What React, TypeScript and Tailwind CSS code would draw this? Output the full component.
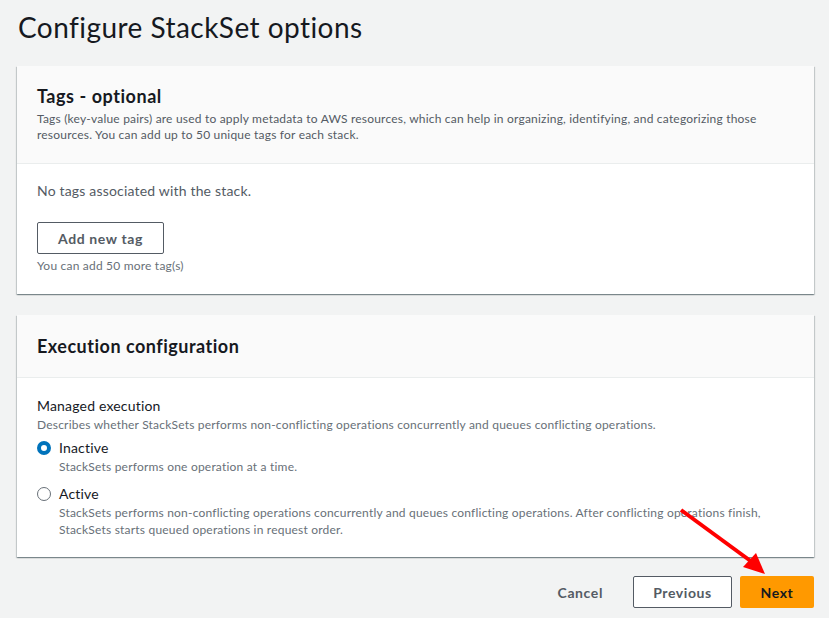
import React from 'react';

const Radio = ({ checked }: { checked: boolean }) =>
  checked ? (
    <span className="mt-[4px] block w-[14px] h-[14px] rounded-full border-[4px] border-[#0073bb] bg-white shrink-0" />
  ) : (
    <span className="mt-[4px] block w-[14px] h-[14px] rounded-full border-[1.5px] border-[#687078] bg-white shrink-0" />
  );

const cardShadow =
  'shadow-[0_1px_1px_0_rgba(0,28,36,0.3),1px_1px_1px_0_rgba(0,28,36,0.15),-1px_1px_1px_0_rgba(0,28,36,0.15)]';

const App = () => {
  return (
    <div className="relative min-h-screen bg-[#f2f3f3] pl-[17px] pr-[15px] font-['Lato',sans-serif] text-[#16191f]">
      <h1 className="pt-[10px] pl-[1px] text-[28px] leading-[34px] font-normal tracking-[0.45px]">
        Configure StackSet options
      </h1>

      <section className={`mt-[22px] bg-white ${cardShadow}`}>
        <div className="bg-[#fafafa] border-b border-[#eaeded] px-[20px] pt-[19px] pb-[20px]">
          <h2 className="text-[18px] leading-[22px] font-bold tracking-[0.55px]">Tags - optional</h2>
          <p className="mt-[4px] text-[12px] leading-[16px] tracking-[0.2px] text-[#545b64]">
            Tags (key-value pairs) are used to apply metadata to AWS resources, which can help in
            organizing, identifying, and categorizing those resources. You can add up to 50 unique
            tags for each stack.
          </p>
        </div>
        <div className="px-[20px] pt-[16px] pb-[20px]">
          <p className="text-[14px] leading-[22px] tracking-[0.18px] text-[#545b64]">
            No tags associated with the stack.
          </p>
          <button className="mt-[20px] h-[32px] w-[127px] rounded-[2px] border border-[#545b64] bg-white text-[14px] font-bold tracking-[0.6px] text-[#545b64]">
            Add new tag
          </button>
          <p className="mt-[4px] text-[12px] leading-[16px] tracking-[0.2px] text-[#687078]">
            You can add 50 more tag(s)
          </p>
        </div>
      </section>

      <section className={`mt-[21px] bg-white ${cardShadow}`}>
        <div className="bg-[#fafafa] border-b border-[#eaeded] px-[20px] pt-[20px] pb-[20px]">
          <h2 className="text-[18px] leading-[22px] font-bold tracking-[0.5px]">Execution configuration</h2>
        </div>
        <div className="px-[20px] pt-[17px] pb-[19px]">
          <p className="text-[14px] leading-[22px] tracking-[0.18px]">Managed execution</p>
          <p className="text-[12px] leading-[16px] tracking-[0.2px] text-[#687078]">
            Describes whether StackSets performs non-conflicting operations concurrently and queues
            conflicting operations.
          </p>
          <div className="mt-[4px] flex gap-[8px]">
            <Radio checked />
            <div>
              <p className="text-[14px] leading-[22px] tracking-[0.18px]">Inactive</p>
              <p className="text-[12px] leading-[16px] tracking-[0.2px] text-[#687078]">
                StackSets performs one operation at a time.
              </p>
            </div>
          </div>
          <div className="mt-[8px] flex gap-[8px]">
            <Radio checked={false} />
            <div>
              <p className="text-[14px] leading-[22px] tracking-[0.18px]">Active</p>
              <p className="-mt-[1px] text-[12px] leading-[17px] tracking-[0.2px] text-[#687078] pr-[20px]">
                StackSets performs non-conflicting operations concurrently and queues conflicting
                operations. After conflicting operations finish, StackSets starts queued operations in
                request order.
              </p>
            </div>
          </div>
        </div>
      </section>

      <div className="mt-[19px] flex items-center justify-end gap-[8px] pb-[9px]">
        <button className="h-[32px] px-[20px] mr-[2px] text-[14px] font-bold tracking-[0.6px] text-[#545b64]">
          Cancel
        </button>
        <button className="h-[32px] w-[99px] rounded-[2px] border border-[#545b64] bg-white text-[14px] font-bold tracking-[0.6px] text-[#545b64]">
          Previous
        </button>
        <button className="h-[32px] w-[74px] rounded-[2px] bg-[#ff9900] text-[14px] font-bold tracking-[0.6px] text-[#16191f]">
          Next
        </button>
      </div>

      <svg className="pointer-events-none absolute left-0 top-0" width="829" height="618">
        <line x1="681" y1="510" x2="752" y2="562" stroke="#f00" strokeWidth="4" />
        <polygon points="765,574 743,567 756,553" fill="#f00" />
      </svg>
    </div>
  );
};

export default App;
